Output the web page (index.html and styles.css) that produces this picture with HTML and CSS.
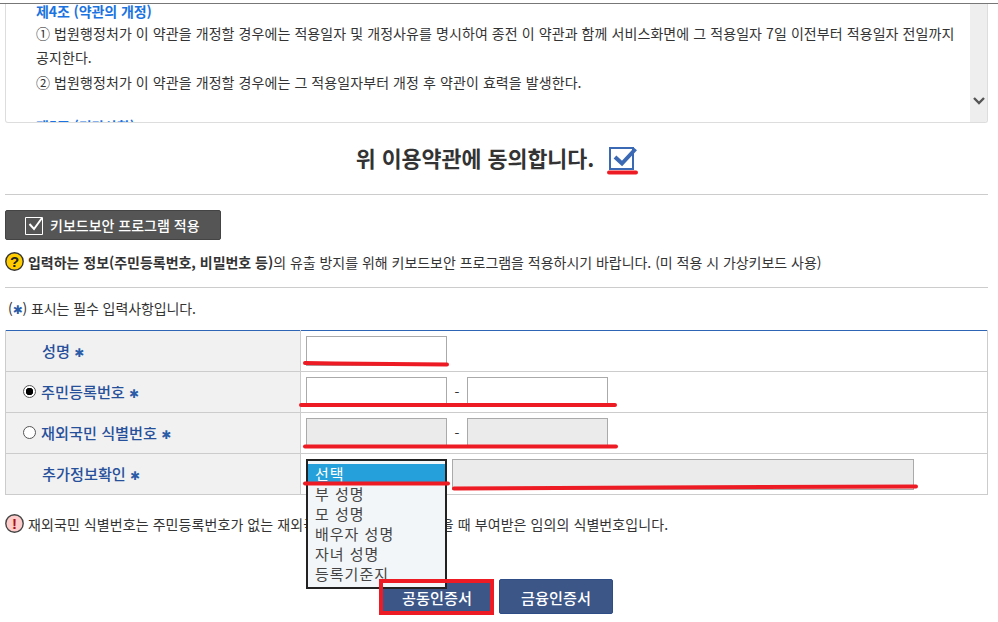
FILE: index.html
```html
<!DOCTYPE html>
<html lang="ko">
<head>
<meta charset="UTF-8">
<title>전자소송 사용자 등록</title>
<link rel="stylesheet" href="styles.css">
</head>
<body>

<div class="topbar"></div>

<div class="page">

  <div class="terms">
    <div class="terms_text">
      <h4 class="terms_title">제4조 (약관의 개정)</h4>
      <p>① 법원행정처가 이 약관을 개정할 경우에는 적용일자 및 개정사유를 명시하여 종전 이 약관과 함께 서비스화면에 그 적용일자 7일 이전부터 적용일자 전일까지<br>공지한다.</p>
      <p>② 법원행정처가 이 약관을 개정할 경우에는 그 적용일자부터 개정 후 약관이 효력을 발생한다.</p>
      <h4 class="terms_title next">제5조 (기타사항)</h4>
    </div>
    <div class="terms_scroll">
      <svg width="14" height="10" viewBox="0 0 14 10"><path d="M2 2l5 5 5-5" fill="none" stroke="#555" stroke-width="2.4"/></svg>
    </div>
  </div>

  <div class="agree">
    <span class="agree_text">위 이용약관에 동의합니다.</span>
    <svg class="agree_check" width="30" height="26" viewBox="0 0 30 26">
      <path d="M3 2h23v21H3z" fill="#fff" stroke="#3b69b4" stroke-width="2"/>
      <path d="M8 11l7 6.500L28.500 3" fill="none" stroke="#3b69b4" stroke-width="4"/>
    </svg>
  </div>

  <div class="keyboard">
    <button class="keyboard_btn" type="button">
      <svg width="20" height="20" viewBox="0 0 20 20">
        <path d="M.5 2.500h17v17H.5z" fill="none" stroke="#fff"/>
        <path d="M4.500 9l4.500 5L17 3" fill="none" stroke="#fff" stroke-width="2"/>
      </svg>
      키보드보안 프로그램 적용
    </button>
    <p class="notice">
      <svg width="19" height="19" viewBox="0 0 19 19"><circle cx="9.500" cy="9.500" r="8.700" fill="#fc0" stroke="#333" stroke-width="1.400"/><text x="9.500" y="15" class="icon_mark">?</text></svg>
      <span class="tight"><b>입력하는 정보(주민등록번호, 비밀번호 등)</b>의 유출 방지를 위해 키보드보안 프로그램을 적용하시기 바랍니다. (미 적용 시 가상키보드 사용)</span>
    </p>
  </div>

  <p class="required">(<span class="star">✱</span>) 표시는 필수 입력사항입니다.</p>

  <table class="form_table">
    <tr>
      <th><span class="th_in">성명 <span class="star">✱</span></span></th>
      <td><input class="field" type="text"></td>
    </tr>
    <tr>
      <th><label class="th_radio"><input type="radio" name="kind" checked><span>주민등록번호 <span class="star">✱</span></span></label></th>
      <td><div class="pair"><input class="field" type="text"><span class="dash">-</span><input class="field" type="text"></div></td>
    </tr>
    <tr>
      <th><label class="th_radio"><input type="radio" name="kind"><span>재외국민 식별번호 <span class="star">✱</span></span></label></th>
      <td><div class="pair"><input class="field off" type="text" disabled><span class="dash">-</span><input class="field off" type="text" disabled></div></td>
    </tr>
    <tr>
      <th><span class="th_in">추가정보확인 <span class="star">✱</span></span></th>
      <td>
        <div class="extra">
          <div class="combo">
            <ul class="combo_list">
              <li class="on">선택</li>
              <li>부 성명</li>
              <li>모 성명</li>
              <li>배우자 성명</li>
              <li>자녀 성명</li>
              <li>등록기준지</li>
            </ul>
          </div>
          <input class="field off wide" type="text" disabled>
        </div>
      </td>
    </tr>
  </table>

  <p class="notice warn">
    <svg width="19" height="19" viewBox="0 0 19 19"><circle cx="9.500" cy="9.500" r="8.700" fill="#fcc" stroke="#444" stroke-width="1.400"/><text x="9.500" y="15" class="icon_mark red">!</text></svg>
    <span class="loose">재외국민 식별번호는 주민등록번호가 없는 재외국민이 인증서를 발급받을 때 부여받은 임의의 식별번호입니다.</span>
  </p>

  <div class="btns">
    <button class="cert_btn" type="button">공동인증서</button>
    <button class="cert_btn" type="button">금융인증서</button>
  </div>

</div>

<!-- red pen marks drawn over the screenshot -->
<svg class="marks" width="998" height="622" viewBox="0 0 998 622">
  <g fill="none" stroke="#ed1c24" stroke-width="4" stroke-linecap="round">
    <path d="M609 172.500h27"/>
    <path d="M305 363l30 .5 112 1"/>
    <path d="M301 405h314"/>
    <path d="M305 446.500h311"/>
    <path d="M305 483.500h143"/>
    <path d="M454 488.500l200-1 262-1"/>
  </g>
  <rect x="381" y="581" width="111" height="32" fill="none" stroke="#ed1c24" stroke-width="4"/>
</svg>

</body>
</html>
```

FILE: styles.css
```css
body {
    margin: 0;
    padding: 0;
    background-color: #fff;
    color: #333;
    font-family: "Noto Sans CJK KR", "Noto Sans", sans-serif;
    font-size: 14px;
}
p, h4, ul {margin: 0; padding: 0;}

.topbar {
    height: 3px;
    border-bottom: 1px solid #777;
}

.page {
    width: 983px;
    height: 618px;
    margin-left: 5px;
    overflow: hidden;
}

/* terms box */
.terms {
    display: flex;
    height: 118px;
    border: 1px solid #ddd;
    border-top: 0;
    border-radius: 0 0 3px 3px;
    overflow: hidden;
}
.terms_text {
    flex: 1;
    padding: 0 8px 0 30px;
    font-size: 14px;
    line-height: 24px;
    letter-spacing: 0.08px;
}
.terms_title {
    color: #1a73e0;
    font-size: 14px;
    font-weight: 700;
    line-height: 14px;
    letter-spacing: -0.1px;
}
.terms_title.next {margin-top: 25px;}
.terms_text p {margin-top: 3px;}
.terms_text p + p {margin-top: 1px;}
.terms_scroll {
    display: flex;
    flex: 0 0 17px;
    align-items: flex-end;
    justify-content: center;
    padding-bottom: 16px;
    background-color: #eee;
}

/* agree */
.agree {
    display: flex;
    align-items: center;
    justify-content: center;
    height: 71px;
    border-bottom: 1px solid #ccc;
}
.agree_text {
    margin-bottom: 2px;
    font-size: 21.7px;
    font-weight: 700;
    color: #333;
}
.agree_check {margin-left: 13px; margin-bottom: -1px;}

/* keyboard security */
.keyboard {
    padding: 15px 0 16px;
    border-bottom: 1px solid #ccc;
}
.keyboard_btn {
    display: flex;
    align-items: center;
    gap: 5px;
    width: 216px;
    height: 30px;
    padding: 0 0 0 19px;
    border: 1px solid #444;
    border-radius: 2px;
    background-color: #555;
    color: #fff;
    font-family: inherit;
    font-size: 14px;
    font-weight: 500;
}
.notice {
    display: flex;
    align-items: center;
    gap: 4px;
    margin-top: 12px;
    height: 19px;
    white-space: nowrap;
}
.tight {letter-spacing: -0.03px;}
.loose {letter-spacing: 0.08px;}
.icon_mark {
    font-family: "Liberation Sans", sans-serif;
    font-size: 15px;
    font-weight: 700;
    text-anchor: middle;
    fill: #222;
}
.icon_mark.red {fill: #a11;}

.required {
    height: 42px;
    padding-left: 3px;
    line-height: 41px;
    letter-spacing: -0.1px;
}
.star {
    color: #2a5ca8;
    font-family: "DejaVu Sans", sans-serif;
    font-size: 12px;
    font-weight: 700;
}

/* form */
.form_table {
    width: 983px;
    border-collapse: collapse;
    border-top: 1px solid #2f65b5;
}
.form_table th, .form_table td {
    height: 40px;
    padding: 0;
    border: 1px solid #ccc;
    border-top: 0;
}
.form_table th {
    box-sizing: border-box;
    width: 295px;
    padding-bottom: 2px;
    background-color: #f1f1f1;
    color: #27509b;
    font-size: 15.2px;
    font-weight: 500;
    text-align: left;
}
.form_table td {padding-left: 5px;}
.th_in {margin-left: 36px;}
.th_radio {display: flex; align-items: center; gap: 5px; margin-left: 17px;}
.th_radio input {
    appearance: none;
    flex: none;
    width: 13px;
    height: 13px;
    margin: 0;
    border: 1px solid #555;
    border-radius: 50%;
    background-color: #fff;
}
.th_radio input:checked {
    background: radial-gradient(circle, #000 0 3.5px, #fff 4px);
}
.field {
    display: block;
    box-sizing: border-box;
    width: 141px;
    height: 30px;
    padding: 0;
    border: 1px solid #aaa;
    background-color: #fff;
}
.field.off {background-color: #ebebeb;}
.field.wide {width: 462px; height: 31px;}
.pair {display: flex; align-items: center;}
.dash {width: 20px; text-align: center;}
.extra {display: flex; gap: 5px;}
.combo {position: relative; width: 141px; height: 31px;}
.combo_list {
    position: absolute;
    top: 0;
    left: 0;
    z-index: 2;
    box-sizing: border-box;
    width: 141px;
    height: 130px;
    padding-top: 3px;
    border: 2px solid #222;
    background-color: #f3f6f8;
    list-style: none;
    color: #444;
    font-size: 15px;
    line-height: 20px;
}
.combo_list li {padding-left: 7px; letter-spacing: 1px;}
.combo_list li.on {background-color: #26a0da; color: #fff;}

.warn {margin-top: 19px;}

/* buttons */
.btns {
    display: flex;
    justify-content: center;
    gap: 5px;
    margin-top: 46px;
}
.cert_btn {
    box-sizing: border-box;
    width: 114px;
    height: 35px;
    padding: 0;
    border: 1px solid #2e4c86;
    border-radius: 2px;
    background-color: #3c5688;
    color: #fff;
    font-family: inherit;
    font-size: 15.2px;
    font-weight: 500;
}

.marks {
    position: absolute;
    top: 0;
    left: 0;
    z-index: 5;
    pointer-events: none;
}
```
